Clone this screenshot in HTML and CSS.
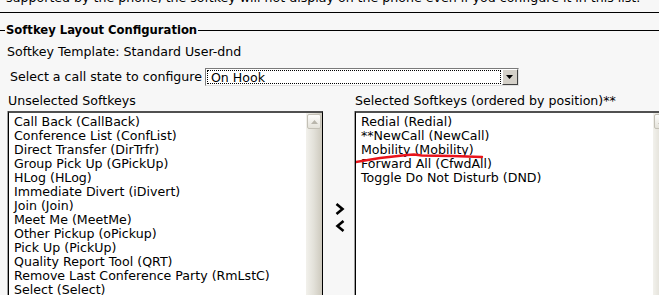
FILE: index.html
```html
<!DOCTYPE html>
<html lang="en">
<head>
    <meta charset="UTF-8">
    <title>Softkey Layout Configuration</title>
    <link rel="stylesheet" href="styles.css">
</head>
<body>
    <div class="notice">
        <p>supported by the phone, the softkey will not display on the phone even if you configure it in this list.</p>
    </div>

    <fieldset class="layout">
        <legend>Softkey Layout Configuration</legend>
        <div class="template">Softkey Template: Standard User-dnd</div>
        <div class="state-row">
            <span>Select a call state to configure</span>
            <div class="dropdown">
                <span class="dropdown-value">On Hook</span>
                <span class="dropdown-btn">
                    <svg width="7" height="4" viewBox="0 0 7 4"><path d="M0 0h7L3.5 4z" fill="#000"/></svg>
                </span>
            </div>
        </div>

        <div class="lists">
            <div class="list-col">
                <div class="list-title">Unselected Softkeys</div>
                <div class="listbox">
                    <ul class="items">
                        <li>Call Back (CallBack)</li>
                        <li>Conference List (ConfList)</li>
                        <li>Direct Transfer (DirTrfr)</li>
                        <li>Group Pick Up (GPickUp)</li>
                        <li>HLog (HLog)</li>
                        <li>Immediate Divert (iDivert)</li>
                        <li>Join (Join)</li>
                        <li>Meet Me (MeetMe)</li>
                        <li>Other Pickup (oPickup)</li>
                        <li>Pick Up (PickUp)</li>
                        <li>Quality Report Tool (QRT)</li>
                        <li>Remove Last Conference Party (RmLstC)</li>
                        <li>Select (Select)</li>
                    </ul>
                    <div class="scrollbar">
                        <div class="scroll-up">
                            <svg width="7" height="4" viewBox="0 0 7 4"><path d="M3.5 0L7 4H0z" fill="#b9b6ac"/></svg>
                        </div>
                    </div>
                </div>
            </div>

            <div class="movers">
                <svg width="10" height="12" viewBox="0 0 10 12"><path d="M1.5 1l6 5-6 5" fill="none" stroke="#000" stroke-width="2.6"/></svg>
                <svg width="10" height="12" viewBox="0 0 10 12"><path d="M8.5 1l-6 5 6 5" fill="none" stroke="#000" stroke-width="2.6"/></svg>
            </div>

            <div class="list-col">
                <div class="list-title">Selected Softkeys (ordered by position)**</div>
                <div class="listbox">
                    <ul class="items">
                        <li>Redial (Redial)</li>
                        <li>**NewCall (NewCall)</li>
                        <li>Mobility (Mobility)</li>
                        <li>Forward All (CfwdAll)</li>
                        <li>Toggle Do Not Disturb (DND)</li>
                    </ul>
                    <div class="scrollbar">
                        <div class="scroll-up">
                            <svg width="7" height="4" viewBox="0 0 7 4"><path d="M3.5 0L7 4H0z" fill="#b9b6ac"/></svg>
                        </div>
                    </div>
                    <svg class="mark" width="136" height="14" viewBox="0 0 136 14">
                        <path d="M1 10.5 L28 6 L55 3 L62 2.5 L70 3.5 L100 4 L130 5" fill="none" stroke="#e8141b" stroke-width="2.4" stroke-linecap="round" stroke-linejoin="round"/>
                    </svg>
                </div>
            </div>
        </div>
    </fieldset>
</body>
</html>
```

FILE: styles.css
```css
* {
    box-sizing: border-box;
}

body {
    margin: 0;
    background: #f7f7f7;
    color: #000;
    font-family: "DejaVu Sans", Verdana, sans-serif;
    font-size: 12.6px;
    line-height: 14px;
    overflow: hidden;
}

/* tail of the previous section, mostly scrolled off */
.notice {
    height: 13px;
    overflow: hidden;
    border-bottom: 1px solid #000;
}

.notice p {
    margin: -9px 0 0 0;
    padding-left: 6px;
    white-space: nowrap;
}

.layout {
    margin: 10px 0 0 0;
    padding: 0;
    border: none;
    border-top: 1px solid #000;
    min-width: 0;
}

.layout legend {
    margin-left: 5px;
    padding: 0 1px;
    font-size: 11.6px;
    font-weight: bold;
}

.template {
    padding: 8px 0 0 7px;
}

.state-row {
    display: flex;
    align-items: center;
    gap: 3px;
    padding: 9px 0 0 10px;
}

.dropdown {
    display: flex;
    width: 314px;
    height: 18px;
    border: 1px solid #7a7a7a;
    border-right-color: #e0e0e0;
    border-bottom-color: #e0e0e0;
    background: #fff;
}

.dropdown-value {
    flex: 1;
    margin: 1px;
    padding-left: 3px;
    line-height: 14px;
    border: 1px dotted #000;
}

.dropdown-btn {
    display: flex;
    align-items: center;
    justify-content: center;
    width: 16px;
    background: #d4d0c8;
    border: 1px solid;
    border-color: #fff #404040 #404040 #fff;
}

.lists {
    display: grid;
    grid-template-columns: 315px 32px 315px;
    padding: 8px 0 0 8px;
}

.list-title {
    height: 14px;
    margin-bottom: 3px;
    white-space: nowrap;
}

.listbox {
    position: relative;
    display: flex;
    height: 190px;
    border: 1px solid #000;
    border-top: 2px solid #505050;
    box-shadow: -1px 0 0 #a0a0a0;
    background: #fff;
    overflow: hidden;
}

.items {
    flex: 1;
    list-style: none;
    margin: 0;
    padding: 2px 0 0 5px;
    white-space: nowrap;
}

.scrollbar {
    width: 16px;
    background: linear-gradient(to right, #f2f1ec, #e2e0d8 50%, #cdc9bd);
}

.scroll-up {
    display: flex;
    align-items: center;
    justify-content: center;
    height: 15px;
    margin: 1px 1px 0 1px;
    border: 1px solid #c3c0b6;
    border-radius: 2px;
    background: linear-gradient(#fdfdfb, #e4e2da);
}

.movers {
    display: flex;
    flex-direction: column;
    align-items: center;
    gap: 5px;
    padding: 109px 0 0 2px;
}

.mark {
    position: absolute;
    left: -4px;
    top: 39px;
}
```
